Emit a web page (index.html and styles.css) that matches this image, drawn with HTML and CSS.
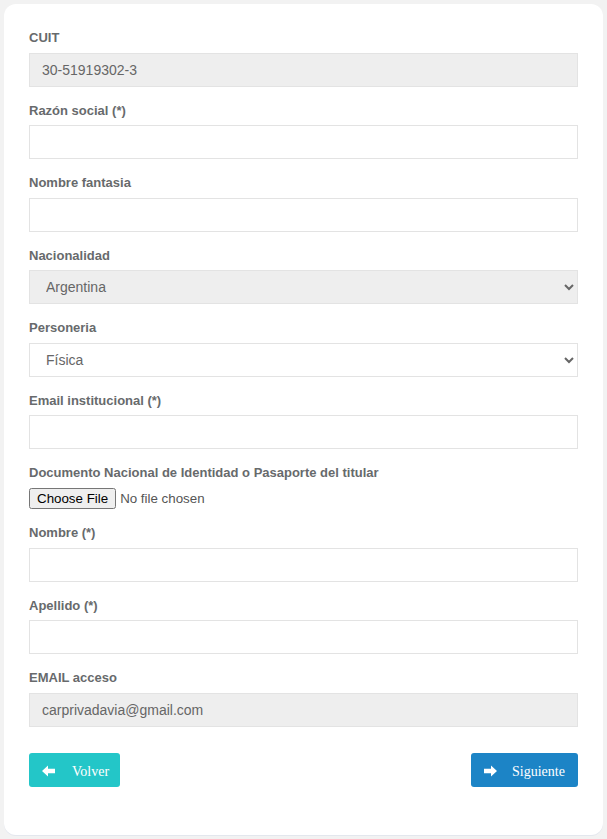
FILE: index.html
```html
<!DOCTYPE html>
<html lang="es">
<head>
<meta charset="utf-8">
<title>Registro</title>
<link rel="stylesheet" href="styles.css">
</head>
<body>
<div class="card">
  <form class="form">
    <div class="group">
      <label class="label">CUIT</label>
      <input class="control" type="text" value="30-51919302-3" disabled>
    </div>
    <div class="group">
      <label class="label">Razón social (*)</label>
      <input class="control" type="text">
    </div>
    <div class="group">
      <label class="label">Nombre fantasia</label>
      <input class="control" type="text">
    </div>
    <div class="group">
      <label class="label">Nacionalidad</label>
      <select class="control select" disabled><option>Argentina</option></select>
    </div>
    <div class="group">
      <label class="label">Personeria</label>
      <select class="control select"><option>Física</option><option>Jurídica</option></select>
    </div>
    <div class="group">
      <label class="label">Email institucional (*)</label>
      <input class="control" type="text">
    </div>
    <div class="group">
      <label class="label">Documento Nacional de Identidad o Pasaporte del titular</label>
      <input class="file" type="file">
    </div>
    <div class="group">
      <label class="label">Nombre (*)</label>
      <input class="control" type="text">
    </div>
    <div class="group">
      <label class="label">Apellido (*)</label>
      <input class="control" type="text">
    </div>
    <div class="group">
      <label class="label">EMAIL acceso</label>
      <input class="control" type="text" value="carprivadavia@gmail.com" disabled>
    </div>
    <div class="actions">
      <button type="button" class="btn btn-back">
        <svg class="ico" viewBox="0 0 14 12" width="14" height="12"><path d="M0 6 L6 0.5 L6 3.8 L13 3.8 L13 8.2 L6 8.2 L6 11.5 Z" fill="#fff"/></svg>
        <span class="txt">Volver</span>
      </button>
      <button type="button" class="btn btn-next">
        <svg class="ico" viewBox="0 0 14 12" width="14" height="12"><path d="M14 6 L8 0.5 L8 3.8 L1 3.8 L1 8.2 L8 8.2 L8 11.5 Z" fill="#fff"/></svg>
        <span class="txt">Siguiente</span>
      </button>
    </div>
  </form>
</div>
</body>
</html>
```
FILE: styles.css
```css
html, body {
  margin: 0;
  padding: 0;
}
body {
  background: #f2f2f2;
  padding: 4px;
  font-family: "Liberation Sans", Arial, sans-serif;
  font-size: 13px;
  line-height: 1.42857;
}
.card {
  background: #fff;
  border-radius: 12px;
  height: 831px;
  box-sizing: border-box;
  padding: 25px 25px 0 25px;
  box-shadow: 0 1px 0 #e3e7ee;
}
.form {
  display: flex;
  flex-direction: column;
}
.group {
  display: flex;
  flex-direction: column;
  margin-bottom: 15px;
}
.label {
  font-weight: bold;
  color: #676a6c;
  font-size: 13px;
  line-height: 18.57px;
  margin-bottom: 5px;
}
.control {
  box-sizing: border-box;
  width: 100%;
  height: 34px;
  padding: 6px 12px;
  border: 1px solid #e3e3e3;
  border-radius: 0;
  background: #fff;
  color: #666;
  font-family: "Liberation Sans", Arial, sans-serif;
  font-size: 14px;
  outline: none;
}
.control:disabled {
  background: #eee;
  color: #666;
  opacity: 1;
}
.select {
  padding: 6px 12px;
}
.file {
  font-family: "Liberation Sans", Arial, sans-serif;
  font-size: 13.33px;
  color: #555;
  height: 21px;
}
.actions {
  display: flex;
  justify-content: space-between;
  margin-top: 11px;
}
.btn {
  display: inline-flex;
  align-items: center;
  height: 34px;
  border: 0;
  border-radius: 3px;
  color: #fff;
  font-family: "Liberation Serif", "Times New Roman", serif;
  font-size: 14px;
  cursor: pointer;
}
.btn .ico {
  flex: none;
  margin-top: 2px;
}
.btn .txt {
  padding-top: 5px;
}
.btn-back {
  background: #23c6c8;
  padding: 0 12px 0 13px;
  gap: 16px;
  width: 91px;
}
.btn-next {
  background: #1c84c6;
  padding: 0 14px 0 12px;
  gap: 15px;
  width: 107px;
}
```
